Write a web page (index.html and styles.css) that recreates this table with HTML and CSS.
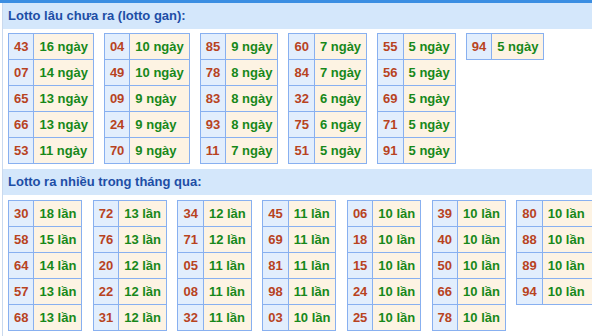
FILE: index.html
```html
<!DOCTYPE html>
<html lang="vi">
<head>
<meta charset="utf-8">
<title>Lotto gan</title>
<link rel="stylesheet" href="styles.css">
</head>
<body>
<div class="topbar"></div>
<div class="box">
  <div class="head">Lotto lâu chưa ra (lotto gan):</div>
  <div class="tables">
    <table class="t"><tr><td class="n">43</td><td class="v">16 ngày</td></tr><tr><td class="n">07</td><td class="v">14 ngày</td></tr><tr><td class="n">65</td><td class="v">13 ngày</td></tr><tr><td class="n">66</td><td class="v">13 ngày</td></tr><tr><td class="n">53</td><td class="v">11 ngày</td></tr></table>
    <table class="t"><tr><td class="n">04</td><td class="v">10 ngày</td></tr><tr><td class="n">49</td><td class="v">10 ngày</td></tr><tr><td class="n">09</td><td class="v">9 ngày</td></tr><tr><td class="n">24</td><td class="v">9 ngày</td></tr><tr><td class="n">70</td><td class="v">9 ngày</td></tr></table>
    <table class="t"><tr><td class="n">85</td><td class="v">9 ngày</td></tr><tr><td class="n">78</td><td class="v">8 ngày</td></tr><tr><td class="n">83</td><td class="v">8 ngày</td></tr><tr><td class="n">93</td><td class="v">8 ngày</td></tr><tr><td class="n">11</td><td class="v">7 ngày</td></tr></table>
    <table class="t"><tr><td class="n">60</td><td class="v">7 ngày</td></tr><tr><td class="n">84</td><td class="v">7 ngày</td></tr><tr><td class="n">32</td><td class="v">6 ngày</td></tr><tr><td class="n">75</td><td class="v">6 ngày</td></tr><tr><td class="n">51</td><td class="v">5 ngày</td></tr></table>
    <table class="t"><tr><td class="n">55</td><td class="v">5 ngày</td></tr><tr><td class="n">56</td><td class="v">5 ngày</td></tr><tr><td class="n">69</td><td class="v">5 ngày</td></tr><tr><td class="n">71</td><td class="v">5 ngày</td></tr><tr><td class="n">91</td><td class="v">5 ngày</td></tr></table>
    <table class="t"><tr><td class="n">94</td><td class="v">5 ngày</td></tr></table>
  </div>
  <div class="head">Lotto ra nhiều trong tháng qua:</div>
  <div class="tables tables2">
    <table class="t"><tr><td class="n">30</td><td class="v">18 lần</td></tr><tr><td class="n">58</td><td class="v">15 lần</td></tr><tr><td class="n">64</td><td class="v">14 lần</td></tr><tr><td class="n">57</td><td class="v">13 lần</td></tr><tr><td class="n">68</td><td class="v">13 lần</td></tr></table>
    <table class="t"><tr><td class="n">72</td><td class="v">13 lần</td></tr><tr><td class="n">76</td><td class="v">13 lần</td></tr><tr><td class="n">20</td><td class="v">12 lần</td></tr><tr><td class="n">22</td><td class="v">12 lần</td></tr><tr><td class="n">31</td><td class="v">12 lần</td></tr></table>
    <table class="t"><tr><td class="n">34</td><td class="v">12 lần</td></tr><tr><td class="n">71</td><td class="v">12 lần</td></tr><tr><td class="n">05</td><td class="v">11 lần</td></tr><tr><td class="n">08</td><td class="v">11 lần</td></tr><tr><td class="n">32</td><td class="v">11 lần</td></tr></table>
    <table class="t"><tr><td class="n">45</td><td class="v">11 lần</td></tr><tr><td class="n">69</td><td class="v">11 lần</td></tr><tr><td class="n">81</td><td class="v">11 lần</td></tr><tr><td class="n">98</td><td class="v">11 lần</td></tr><tr><td class="n">03</td><td class="v">10 lần</td></tr></table>
    <table class="t"><tr><td class="n">06</td><td class="v">10 lần</td></tr><tr><td class="n">18</td><td class="v">10 lần</td></tr><tr><td class="n">15</td><td class="v">10 lần</td></tr><tr><td class="n">24</td><td class="v">10 lần</td></tr><tr><td class="n">25</td><td class="v">10 lần</td></tr></table>
    <table class="t"><tr><td class="n">39</td><td class="v">10 lần</td></tr><tr><td class="n">40</td><td class="v">10 lần</td></tr><tr><td class="n">50</td><td class="v">10 lần</td></tr><tr><td class="n">66</td><td class="v">10 lần</td></tr><tr><td class="n">78</td><td class="v">10 lần</td></tr></table>
    <table class="t last"><tr><td class="n">80</td><td class="v">10 lần</td></tr><tr><td class="n">88</td><td class="v">10 lần</td></tr><tr><td class="n">89</td><td class="v">10 lần</td></tr><tr><td class="n">94</td><td class="v">10 lần</td></tr></table>
  </div>
</div>
</body>
</html>
```

FILE: styles.css
```css
html, body {
  margin: 0;
  padding: 0;
  background: #fff;
  font-family: "Liberation Sans", Arial, sans-serif;
  font-size: 13px;
  overflow: hidden;
}
.topbar {
  height: 3px;
  background: #3b8ee2;
}
.box {
  margin-left: 2px;
  border-left: 1px solid #c9d9ee;
  padding-bottom: 10px;
}
.head {
  height: 26px;
  line-height: 26px;
  padding-left: 5px;
  background: #d4e7fb;
  color: #1d4ea6;
  font-weight: bold;
}
.tables {
  display: flex;
  flex-wrap: nowrap;
  align-items: flex-start;
  gap: 10px;
  padding: 4px 0 0 5px;
  margin-bottom: 5px;
  overflow: hidden;
}
.tables2 {
  padding-top: 5px;
  gap: 10.4px;
}
.t {
  border-collapse: collapse;
  flex: none;
}
.t.last {
  width: 78px;
}
.t.last td.n {
  width: 1px;
}
.t td {
  border: 1px solid #88b0f0;
  height: 26px;
  padding: 0 5px;
  font-weight: bold;
  white-space: nowrap;
  box-sizing: border-box;
}
.t td.n {
  background: #e2eefd;
  color: #b8431f;
}
.t td.v {
  background: #fdf3e3;
  color: #17881a;
}
```
